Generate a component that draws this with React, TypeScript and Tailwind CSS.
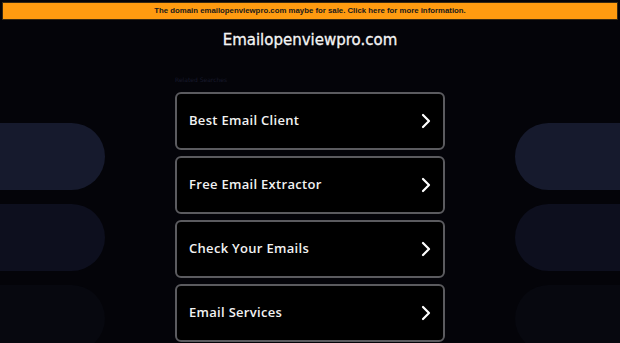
import React from "react";

const items = ["Best Email Client", "Free Email Extractor", "Check Your Emails", "Email Services"];

function Chevron() {
  return (
    <svg width="10" height="16" viewBox="0 0 10 16" fill="none">
      <path d="M2 2 L8 8 L2 14" stroke="white" strokeWidth="2.2" strokeLinecap="round" strokeLinejoin="round" />
    </svg>
  );
}

export default function App() {
  return (
    <div className="relative w-[620px] h-[343px] overflow-hidden bg-[#040409]" style={{ fontFamily: "'DejaVu Sans', sans-serif" }}>
      {/* side pills */}
      <div className="absolute left-0 top-[123px] flex flex-col gap-[14px]">
        <div className="w-[105px] h-[67px] rounded-r-[34px] bg-[#161a2d]" />
        <div className="w-[105px] h-[67px] rounded-r-[34px] bg-[#0d0f1e]" />
        <div className="w-[105px] h-[67px] rounded-r-[34px] bg-[#07080f]" />
      </div>
      <div className="absolute right-0 top-[123px] flex flex-col gap-[14px]">
        <div className="w-[105px] h-[67px] rounded-l-[34px] bg-[#161a2d]" />
        <div className="w-[105px] h-[67px] rounded-l-[34px] bg-[#0d0f1e]" />
        <div className="w-[105px] h-[67px] rounded-l-[34px] bg-[#07080f]" />
      </div>

      <div className="relative flex flex-col items-center pt-[2px]">
        <div className="w-[616px] h-[18px] bg-[#ff9b10] border border-[#3a2a10] flex items-center justify-center">
          <span className="text-[7.8px] font-bold text-[#1a1a1a]" style={{ fontFamily: "'Liberation Sans', Arial, sans-serif" }}>
            The domain emailopenviewpro.com maybe for sale. Click here for more information.
          </span>
        </div>
        <div className="mt-[10px] text-[15px] text-[#f4f4f4] leading-[20px] [-webkit-text-stroke:0.3px_#f4f4f4]">Emailopenviewpro.com</div>
        <div className="w-[270px] mt-[26px] text-[6px] leading-[8px] text-[#181a2c]">Related Searches</div>
        <div className="w-[270px] mt-[8px] flex flex-col gap-[6px]">
          {items.map((t) => (
            <div key={t} className="h-[58px] rounded-[6px] border-2 border-[#5b5b5f] bg-black flex items-center justify-between pl-[12px] pr-[12px]">
              <span className="text-[13px] font-semibold text-[#f2f2f2] tracking-[0.3px]" style={{ fontFamily: "'Open Sans', sans-serif" }}>{t}</span>
              <Chevron />
            </div>
          ))}
        </div>
      </div>
    </div>
  );
}
